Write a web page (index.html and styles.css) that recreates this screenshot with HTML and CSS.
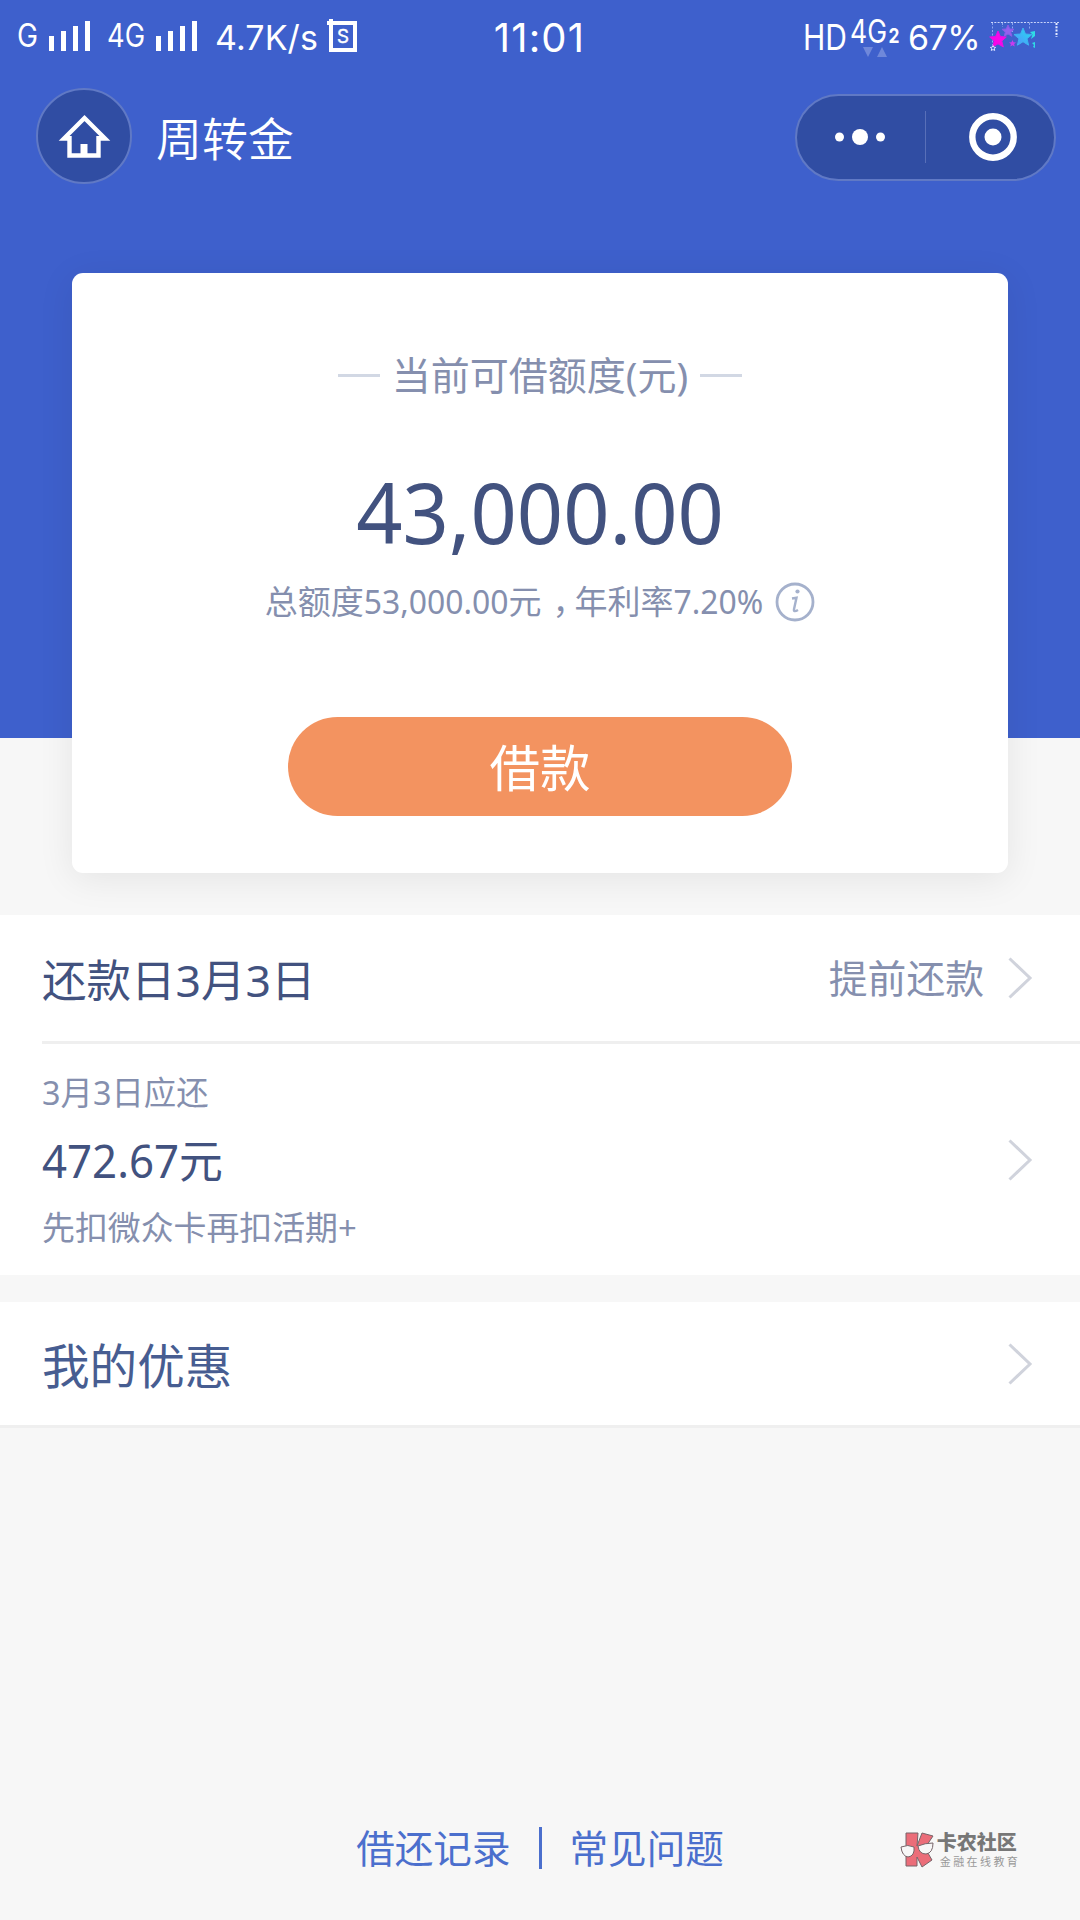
FILE: index.html
```html
<!DOCTYPE html>
<html lang="zh-CN">
<head>
<meta charset="utf-8">
<title>周转金</title>
<link rel="stylesheet" href="styles.css">
</head>
<body>
<header class="hero">
  <div class="status">
    <div class="status-left">
      <svg class="net" width="190" height="40" viewBox="0 0 190 40" fill="#fff">
        <text x="0" y="33" font-size="32" textLength="21" lengthAdjust="spacingAndGlyphs">G</text>
        <path d="M32 22h5v15h-5zM44 17h5v20h-5zM56 12h5v25h-5zM68 7h5v30h-5z"/>
        <text x="90" y="33" font-size="32" textLength="38" lengthAdjust="spacingAndGlyphs">4G</text>
        <path d="M139 22h5v15h-5zM151 17h5v20h-5zM163 12h5v25h-5zM175 7h5v30h-5z"/>
      </svg>
      <span class="speed">4.7K/s</span>
      <svg class="sim" width="32" height="34" viewBox="0 0 32 34" fill="none" stroke="#fff">
        <path d="M4 4h24v27H4z" stroke-width="4"/>
        <path d="M0 4h4M4 0v4" stroke-width="4"/>
        <text x="10" y="24" font-size="19" textLength="12" lengthAdjust="spacingAndGlyphs" fill="#fff" stroke-width=".4">S</text>
      </svg>
    </div>
    <div class="clock">11:01</div>
    <div class="status-right">
      <svg width="98" height="44" viewBox="0 0 98 44" fill="#fff">
        <text x="-2" y="35" font-size="36" textLength="44" lengthAdjust="spacingAndGlyphs">HD</text>
        <text x="45" y="28" font-size="32" textLength="37" lengthAdjust="spacingAndGlyphs">4G</text>
        <text x="83.500" y="28" font-size="20" textLength="11" lengthAdjust="spacingAndGlyphs" font-weight="700">2</text>
        <path d="M58 32h10l-5 10zM72 42h10l-5-10z" fill="#6f88da"/>
      </svg>
      <span class="battery">67%</span>
      <svg class="stars" width="72" height="34" viewBox="0 0 72 34">
        <defs>
          <linearGradient id="pink" x1="0" y1="1" x2="1" y2="0"><stop offset="0" stop-color="#ff00e5"/><stop offset="1" stop-color="#f010ea"/></linearGradient>
          <linearGradient id="cyan" x1="0" y1="1" x2="1" y2="0"><stop offset="0" stop-color="#5a8cff"/><stop offset="1" stop-color="#1ce3ee"/></linearGradient>
        </defs>
        <path d="M1 2.500H69" stroke="#c9d4fa" stroke-width="1.200" stroke-dasharray="2 1.300"/>
        <path d="M66.500 3v14" stroke="#e5ebff" stroke-width="2" stroke-dasharray="2 1.300"/>
        <path d="M2.500 3v22M12.500 3v4M22.500 3v10M39.500 3v6" stroke="#8da6ef" stroke-dasharray="2 1.500"/>
        <path d="M8 11l2.400 5.500 5.900.5-4.500 4 1.500 6-5.300-3.200L2.700 27l1.500-6-4.500-4 5.900-.5z" fill="url(#pink)" stroke="#e60fe6"/>
        <path d="M18 5l1.800 4 4.200.3-3.300 2.800 1.200 4.200-3.900-2.400-3.700 2.400 1-4.200L12 9.300l4.200-.3z" fill="#9560ee" stroke="#8a5be8"/>
        <path d="M33 8l2.500 6 6.500.5-5 4.200 1.600 6.500-5.600-3.500-5.600 3.500 1.600-6.500-5-4.200 6.500-.5z" fill="url(#cyan)" stroke="#3cb4f0"/>
        <path d="M22.500 20l1 2.300 2.500.2-1.900 1.600.6 2.500-2.200-1.400-2.200 1.400.6-2.500-1.900-1.600 2.500-.2z" fill="#c83bee"/>
        <path d="M45 11l-5 1 2.500 2.500L41 19l4-3zM45 22l-3 1 2 2-1 2 2 1z" fill="#2edce5"/>
        <path d="M3 25.500l.8 1.700 1.900.2-1.400 1.200.4 1.900L3 29.500l-1.700 1 .4-1.900L.3 27.400l1.900-.2z" fill="none" stroke="#d9e0ff"/>
      </svg>
    </div>
  </div>
  <nav class="nav">
    <div class="home">
      <svg width="48" height="44" viewBox="0 0 48 44" fill="none" stroke="#fff" stroke-width="4.400">
        <path d="M9.500 24.500H4L24.500 4 45 24.500h-6.500M9.500 22v19.500h29V22"/>
        <path d="M20.500 30h7v12h-7z" fill="#fff" stroke="none"/>
      </svg>
    </div>
    <h1 class="page-title">周转金</h1>
    <div class="capsule">
      <div class="cap-half">
        <svg width="52" height="20" viewBox="0 0 52 20" fill="#fff"><circle cx="5.500" cy="10" r="4.500"/><circle cx="26" cy="10" r="8"/><circle cx="46.500" cy="10" r="4.500"/></svg>
      </div>
      <div class="cap-line"></div>
      <div class="cap-half cap-close">
        <svg width="48" height="48" viewBox="0 0 48 48"><circle cx="24" cy="24" r="20.700" fill="none" stroke="#fff" stroke-width="6.400"/><circle cx="24" cy="24" r="8.500" fill="#fff"/></svg>
      </div>
    </div>
  </nav>
</header>
<main>
  <section class="card">
    <div class="card-label"><i class="dash"></i><span>当前可借额度(元)</span><i class="dash"></i></div>
    <div class="amount">43,000.00</div>
    <div class="detail">
      <span>总额度<span class="num">53,000.00</span>元<span class="comma">，</span>年利率<span class="num">7.20%</span></span>
      <svg width="40" height="40" viewBox="0 0 40 40" fill="none" stroke="#a5b1cc" stroke-width="2.800">
        <circle cx="20" cy="20" r="18"/>
        <path d="M17 16.500l4.500-.8-2.500 11.500q-.6 3.500 4 .8" stroke-width="2.400"/>
        <circle cx="22.500" cy="9.500" r="2.100" fill="#a5b1cc" stroke="none"/>
      </svg>
    </div>
    <button class="borrow">借款</button>
  </section>
  <section class="list">
    <div class="row row-head">
      <span class="row-title">还款日3月3日</span>
      <span class="row-action">提前还款</span>
      <svg class="chev" width="24" height="42" viewBox="0 0 24 42"><path d="M1.500 1.500L22 21 1.500 40.500"/></svg>
    </div>
    <div class="row row-due">
      <div class="due">
        <div class="due-note due-date">3月3日应还</div>
        <div class="due-sum">472.67元</div>
        <div class="due-note">先扣微众卡再扣活期+</div>
      </div>
      <svg class="chev" width="24" height="42" viewBox="0 0 24 42"><path d="M1.500 1.500L22 21 1.500 40.500"/></svg>
    </div>
  </section>
  <section class="list offers">
    <div class="row">
      <span class="offer-title">我的优惠</span>
      <svg class="chev" width="24" height="42" viewBox="0 0 24 42"><path d="M1.500 1.500L22 21 1.500 40.500"/></svg>
    </div>
  </section>
</main>
<footer class="footer">
  <div class="links"><a>借还记录</a><i class="sep"></i><a>常见问题</a></div>
  <div class="brand">
    <svg width="36" height="36" viewBox="0 0 36 36" stroke="#77656a" stroke-width="1">
      <path d="M6 1h12l-1 13 5-13 11 3-8 12 7 12-10 7-5-10v9H6z" fill="#eb6d79"/>
      <path d="M1 15q7-3 13 0 1 9-6 10-6-1-7-10zM18 14q7-3 15-3 0 10-7 11-7 0-8-8z" fill="#f7f7f7"/>
    </svg>
    <div class="brand-text"><b>卡农社区</b><span>金融在线教育</span></div>
  </div>
</footer>
</body>
</html>
```
FILE: styles.css
```css
* { box-sizing: border-box; }
body {
  margin: 0;
  width: 1080px;
  height: 1920px;
  overflow: hidden;
  display: flex;
  flex-direction: column;
  background: #f7f7f7;
  color: #42527f;
  font-family: "Noto Sans", "Noto Sans CJK SC", sans-serif;
}
svg { display: block; flex: none; overflow: visible; }
.hero { height: 738px; flex: none; background: #3e60cc; color: #fff; }

.status {
  height: 74px;
  padding: 0 18px 0 17px;
  display: grid;
  grid-template-columns: 1fr auto 1fr;
  align-items: center;
  font-family: Inter, Roboto, sans-serif;
}
.status svg text { font-family: Inter, Roboto, sans-serif; }
.status-left, .status-right { display: flex; align-items: center; }
.status-right { justify-content: flex-end; }
.net { margin-top: -6px; }
.speed { font-size: 34px; margin-left: 8px; width: 103px; letter-spacing: .1px; white-space: nowrap; }
.sim { margin: -2px 0 0 9px; }
.clock { font-size: 40px; width: 94px; text-align: center; letter-spacing: 1.2px; white-space: nowrap; }
.battery { font-size: 34px; width: 72px; margin: 0 10px 0 5px; letter-spacing: -.6px; }
.stars { margin-top: -1px; }

.nav { height: 124px; padding: 0 24px 0 36px; display: flex; align-items: center; }
.home {
  width: 96px; height: 96px; border-radius: 50%;
  border: 2px solid #6079c5; background: #304da3;
  display: flex; align-items: center; justify-content: center;
}
.page-title { flex: 1; margin: 0 0 1px 24px; font-size: 46px; font-weight: 350; line-height: 60px; font-family: "Noto Sans CJK SC DemiLight", "Noto Sans CJK SC", sans-serif; }
.capsule {
  width: 261px; height: 87px; border-radius: 44px;
  border: 2px solid #6079c5; background: #304da3;
  display: flex; align-items: center; margin-top: 2px;
}
.cap-half { width: 128px; display: flex; justify-content: center; padding-right: 2px; }
.cap-close { padding: 0 0 0 5px; }
.cap-line { width: 1px; height: 52px; background: #586fb8; }

.card {
  width: 936px; height: 600px;
  margin: -465px auto 42px;
  padding-top: 77px;
  background: #fff;
  border-radius: 11px;
  box-shadow: 0 6px 36px rgba(0, 0, 0, .08);
  display: flex; flex-direction: column; align-items: center;
}
.card-label { display: flex; align-items: center; gap: 12px; font-size: 39px; line-height: 50px; color: #858fae; }
.dash { width: 42px; height: 3px; background: #d2d8e4; }
.amount { margin-top: 62px; font-size: 81px; line-height: 100px; color: #42527f; transform: scaleY(1.045); }
.detail { margin-top: 20px; display: flex; align-items: center; gap: 12px; font-size: 33px; line-height: 40px; color: #858fae; }
.num { font-size: 31.9px; }
.comma { display: inline-block; width: 33px; text-indent: 11px; line-height: 1; white-space: nowrap; }
.borrow {
  margin-top: 95px; width: 504px; height: 99px; padding: 3px 0 0;
  border: 0; border-radius: 50px; background: #f39360; color: #fff;
  font: 50.5px/96px "Noto Sans", "Noto Sans CJK SC", sans-serif;
}

.list { background: #fff; }
.row { display: flex; align-items: center; padding-right: 48px; margin-left: 42px; }
.row-head { height: 129px; border-bottom: 3px solid #efefef; }
.row-title { flex: 1; font-size: 44.5px; line-height: 60px; padding-top: 3px; }
.row-action { font-size: 38.8px; line-height: 50px; color: #858fae; margin-right: 24px; }
.chev { fill: none; stroke: #d0d3dc; stroke-width: 3; }
.row-due { height: 231px; }
.due { flex: 1; }
.due-note { font-size: 32.9px; line-height: 48px; color: #858fae; }
.due-date { font-size: 32.4px; }
.due-sum { font-size: 43.8px; line-height: 60px; margin: 14px 0; transform: scaleY(1.04); }
.offers { margin-top: 27px; height: 126px; border-bottom: 3px solid #efefef; }
.offers .row { height: 123px; }
.offer-title { flex: 1; font-size: 47.6px; line-height: 60px; padding-top: 4px; color: #475d91; }

.footer { margin-top: auto; height: 144px; display: grid; grid-template-columns: 1fr auto 1fr; align-items: center; }
.links { grid-column: 2; display: flex; align-items: center; gap: 28px; font-size: 38.6px; line-height: 50px; color: #4b6fcd; }
.sep { width: 3px; height: 42px; background: #4b6fcd; }
.brand { display: flex; align-items: center; margin: 3px 0 0 176px; }
.brand-text { display: flex; flex-direction: column; gap: 3px; margin-left: 1px; color: #777; }
.brand b { font: 900 20px/20px "Noto Sans CJK SC", sans-serif; }
.brand-text span { font: 11px/13px "Noto Sans CJK SC", sans-serif; letter-spacing: 2.4px; margin-left: 3px; color: #999; }
```
